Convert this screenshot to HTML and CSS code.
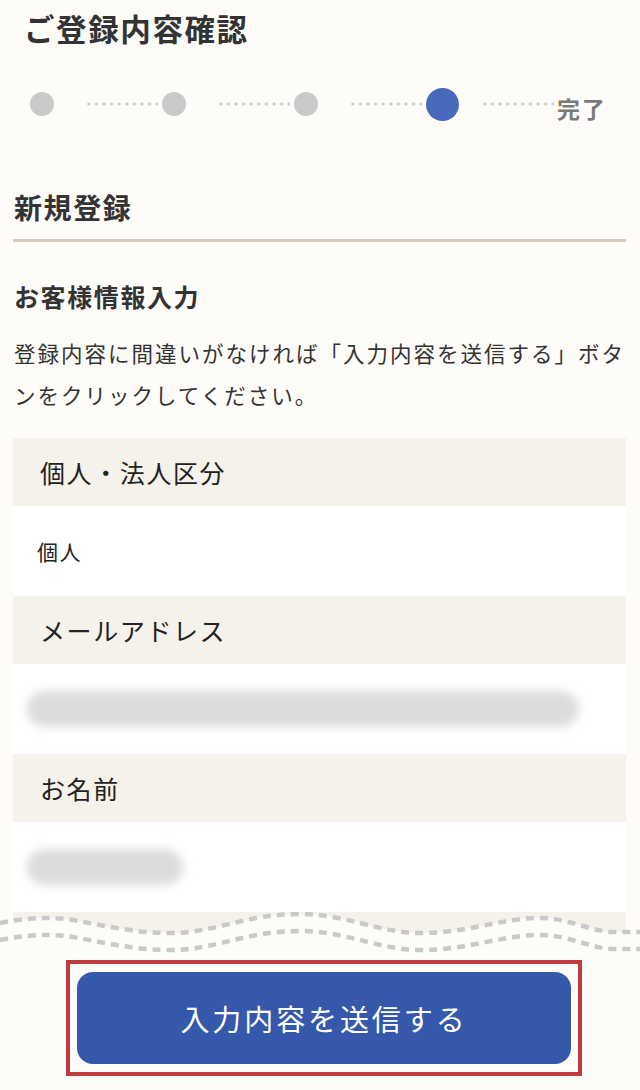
FILE: index.html
```html
<!DOCTYPE html>
<html lang="ja">
<head>
    <meta charset="UTF-8">
    <meta name="viewport" content="width=device-width, initial-scale=1.0">
    <title>ご登録内容確認</title>
    <link rel="stylesheet" href="styles.css">
</head>
<body>
    <div class="container">
        <h1 class="page-title">ご登録内容確認</h1>

        <div class="stepper">
            <span class="step"></span>
            <span class="dots"></span>
            <span class="step"></span>
            <span class="dots"></span>
            <span class="step"></span>
            <span class="dots"></span>
            <span class="step step-current"></span>
            <span class="dots"></span>
            <span class="step-label">完了</span>
        </div>

        <h2 class="section-title">新規登録</h2>
        <h3 class="sub-title">お客様情報入力</h3>
        <p class="lead">登録内容に間違いがなければ「入力内容を送信する」ボタンをクリックしてください。</p>

        <div class="confirm-table">
            <div class="row-label">個人・法人区分</div>
            <div class="row-value">個人</div>
            <div class="row-label">メールアドレス</div>
            <div class="row-value"><span class="masked masked-long"></span></div>
            <div class="row-label">お名前</div>
            <div class="row-value"><span class="masked masked-short"></span></div>
        </div>
    </div>

    <div class="wave">
        <svg width="640" height="45" viewBox="0 0 640 45">
            <rect x="13" y="0" width="613" height="26" fill="#f4f2ea"/>
            <path d="M0 11 C20 7 35 6 50 6 C80 6 120 21 170 21 C215 21 245 2 300 2 C345 2 380 21 420 21 C470 21 500 6 540 6 C570 6 590 20 615 20 L640 20 L640 45 L0 45 Z" fill="#fdfcf8"/>
            <path class="wave-line" d="M0 11 C20 7 35 6 50 6 C80 6 120 21 170 21 C215 21 245 2 300 2 C345 2 380 21 420 21 C470 21 500 6 540 6 C570 6 590 20 615 20 L640 20"/>
            <path class="wave-line" d="M0 28 C20 24 35 23 50 23 C80 23 120 38 170 38 C215 38 245 19 300 19 C345 19 380 38 420 38 C470 38 500 23 540 23 C570 23 590 37 615 37 L640 37"/>
        </svg>
    </div>

    <div class="submit-area">
        <div class="submit-frame">
            <button class="btn-submit">入力内容を送信する</button>
        </div>
    </div>
</body>
</html>
```

FILE: styles.css
```css
body {
    font-family: "Noto Sans CJK JP", "Noto Sans", sans-serif;
    background-color: #fdfcf8;
    color: #333;
    margin: 0;
    padding: 0;
    letter-spacing: 0.1em;
}
.container {
    padding: 0 14px 0 13px;
}
.page-title {
    margin: 0;
    padding-left: 11px;
    font-size: 30.5px;
    line-height: 56px;
    font-weight: bold;
    color: #333;
}
.stepper {
    display: flex;
    align-items: center;
    height: 40px;
    margin-top: 28px;
    padding-left: 17px;
}
.step {
    width: 24px;
    height: 24px;
    border-radius: 50%;
    background-color: #cacaca;
    flex-shrink: 0;
}
.step-current {
    width: 33px;
    height: 33px;
    background-color: #4868bb;
}
.dots {
    width: 73px;
    height: 4px;
    margin: 0 4px 0 31px;
    background-image: radial-gradient(circle, #c9c9c9 1.3px, transparent 1.8px);
    background-size: 7.6px 4px;
    background-repeat: repeat-x;
}
.step-current + .dots {
    margin: 0 3px 0 22px;
}
.step-label {
    margin-top: 8px;
    font-size: 23px;
    font-weight: bold;
    color: #7a7a7a;
    letter-spacing: 0.08em;
}
.section-title {
    margin: 63px 0 0;
    padding: 0 0 12px 1px;
    font-size: 28px;
    line-height: 40px;
    font-weight: bold;
    border-bottom: 3px solid #d3cbbf;
}
.sub-title {
    margin: 34px 0 0;
    padding-left: 1px;
    font-size: 25px;
    line-height: 40px;
    font-weight: bold;
}
.lead {
    margin: 16px 0 0;
    padding-left: 1px;
    font-size: 21.5px;
    line-height: 42px;
    letter-spacing: 2px;
}
.confirm-table {
    margin-top: 22px;
}
.row-label {
    display: flex;
    align-items: center;
    height: 68px;
    padding-left: 27px;
    background-color: #f4f2ea;
    font-size: 25px;
    color: #222;
}
.row-value {
    display: flex;
    align-items: center;
    height: 90px;
    padding-left: 24px;
    background-color: #fff;
    font-size: 21px;
    color: #222;
}
.masked {
    display: block;
    height: 36px;
    margin-left: -10px;
    border-radius: 18px;
    background-color: #dcdcdc;
    filter: blur(5px);
}
.masked-long {
    width: 552px;
}
.masked-short {
    width: 156px;
}
.wave {
    height: 45px;
}
.wave svg {
    display: block;
}
.wave-line {
    fill: none;
    stroke: #c9c9c9;
    stroke-width: 4.5;
    stroke-dasharray: 8 6;
}
.submit-area {
    padding-top: 3px;
}
.submit-frame {
    width: 494px;
    margin-left: 66px;
    padding: 8px 7px;
    border: 4px solid #bf3b3e;
}
.btn-submit {
    display: block;
    width: 100%;
    height: 92px;
    border: none;
    border-radius: 16px;
    background-color: #3658aa;
    color: #fff;
    font-family: inherit;
    font-size: 29px;
    letter-spacing: 0.1em;
    cursor: pointer;
}
```
